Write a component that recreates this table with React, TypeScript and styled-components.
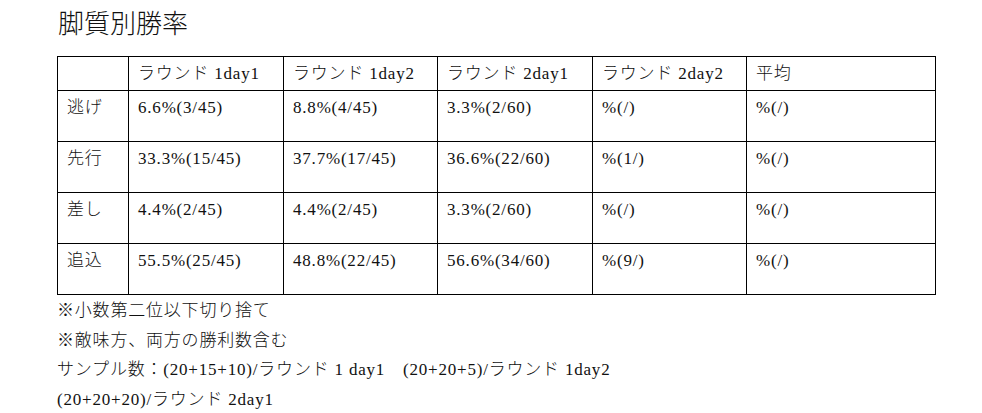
import styled, { createGlobalStyle } from "styled-components";

const GlobalStyle = createGlobalStyle`
  html, body {
    margin: 0;
    padding: 0;
    background: #fff;
  }
  body {
    font-family: "Liberation Serif", "Noto Sans CJK JP", serif;
    font-weight: 300;
    color: #111;
  }
`;

const Page = styled.main`
  padding: 8px 0 0 57px;
`;

const Title = styled.h1`
  margin: 0 0 14px 1px;
  font-size: 26px;
  font-weight: 300;
  line-height: 34px;
`;

const Table = styled.table`
  border-collapse: collapse;
  width: 878px;
  table-layout: fixed;
  font-size: 17px;
  letter-spacing: 0.8px;
`;

const HeadCell = styled.td`
  border: 1px solid #000;
  padding: 5px 9px 4px;
  height: 24px;
  line-height: 24px;
  text-align: left;
  vertical-align: top;
`;

const Cell = styled.td`
  border: 1px solid #000;
  padding: 5px 9px 0;
  height: 45px;
  line-height: 24px;
  vertical-align: top;
`;

const Notes = styled.div`
  font-size: 17px;
  letter-spacing: 0.8px;
  line-height: 29.6px;
  padding-top: 1px;
  white-space: pre;
`;

const columns = ["", "ラウンド 1day1", "ラウンド 1day2", "ラウンド 2day1", "ラウンド 2day2", "平均"];
const widths = [71, 155, 154, 155, 154, 189];

const rows: string[][] = [
  ["逃げ", "6.6%(3/45)", "8.8%(4/45)", "3.3%(2/60)", "%(/)", "%(/)"],
  ["先行", "33.3%(15/45)", "37.7%(17/45)", "36.6%(22/60)", "%(1/)", "%(/)"],
  ["差し", "4.4%(2/45)", "4.4%(2/45)", "3.3%(2/60)", "%(/)", "%(/)"],
  ["追込", "55.5%(25/45)", "48.8%(22/45)", "56.6%(34/60)", "%(9/)", "%(/)"],
];

const notes = [
  "※小数第二位以下切り捨て",
  "※敵味方、両方の勝利数含む",
  "サンプル数：(20+15+10)/ラウンド 1 day1　(20+20+5)/ラウンド 1day2",
  "(20+20+20)/ラウンド 2day1",
];

export default function App() {
  return (
    <>
      <GlobalStyle />
      <Page>
        <Title>脚質別勝率</Title>
        <Table>
          <colgroup>
            {widths.map((w, i) => (
              <col key={i} style={{ width: w }} />
            ))}
          </colgroup>
          <thead>
            <tr>
              {columns.map((c, i) => (
                <HeadCell key={i}>{c}</HeadCell>
              ))}
            </tr>
          </thead>
          <tbody>
            {rows.map((r, i) => (
              <tr key={i}>
                {r.map((v, j) => (
                  <Cell key={j}>{v}</Cell>
                ))}
              </tr>
            ))}
          </tbody>
        </Table>
        <Notes>
          {notes.map((n, i) => (
            <div key={i}>{n}</div>
          ))}
        </Notes>
      </Page>
    </>
  );
}
